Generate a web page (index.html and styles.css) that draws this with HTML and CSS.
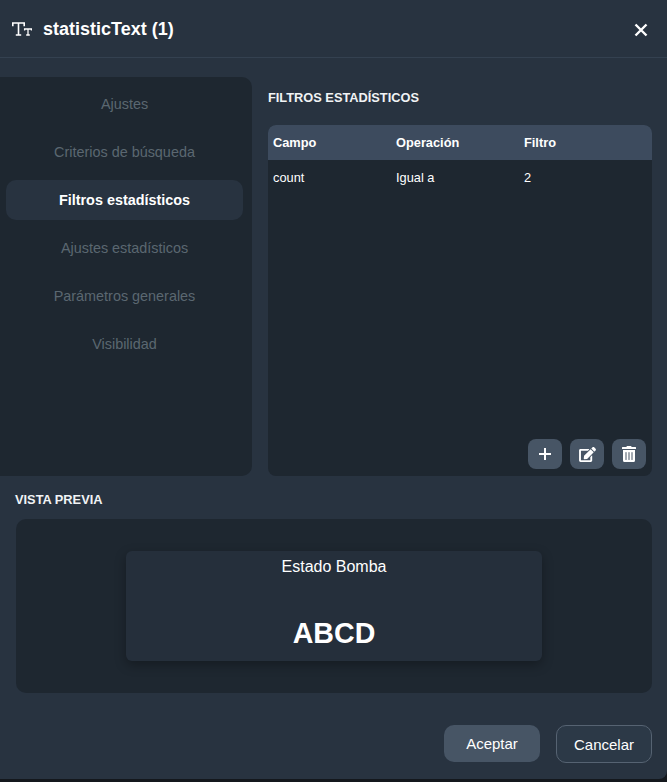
FILE: index.html
```html
<!DOCTYPE html>
<html lang="en">
<head>
    <meta charset="UTF-8">
    <title>statisticText</title>
    <link rel="stylesheet" href="styles.css">
</head>
<body>
    <div class="dialog">
        <header class="dialog-header">
            <svg class="title-icon" width="20" height="14" viewBox="0 0 20 14" fill="none" stroke="#fff" stroke-width="1.6">
                <path d="M0.8 4.2V1H12.2V4.2M6.5 1V13M3.8 13H9.2"/>
                <path stroke-width="1.3" d="M12.6 8.6V7H19.4V8.6M16 7V13M14.2 13H17.8"/>
            </svg>
            <h1>statisticText (1)</h1>
            <button type="button" class="close-btn" aria-label="Cerrar">
                <svg width="14" height="14" viewBox="0 0 14 14" stroke="#fff" stroke-width="2.4">
                    <path d="M1.5 1.5L12.5 12.5M12.5 1.5L1.5 12.5"/>
                </svg>
            </button>
        </header>

        <div class="main">
            <nav class="sidebar">
                <a class="nav-item">Ajustes</a>
                <a class="nav-item">Criterios de búsqueda</a>
                <a class="nav-item active">Filtros estadísticos</a>
                <a class="nav-item">Ajustes estadísticos</a>
                <a class="nav-item">Parámetros generales</a>
                <a class="nav-item">Visibilidad</a>
            </nav>

            <section class="content">
                <h2>FILTROS ESTADÍSTICOS</h2>
                <div class="table-box">
                    <div class="table-row table-head">
                        <span>Campo</span>
                        <span>Operación</span>
                        <span>Filtro</span>
                    </div>
                    <div class="table-row">
                        <span>count</span>
                        <span>Igual a</span>
                        <span>2</span>
                    </div>
                    <div class="table-actions">
                        <button type="button" class="icon-btn" aria-label="Añadir">
                            <svg width="14" height="14" viewBox="0 0 14 14" stroke="#fff" stroke-width="2">
                                <path d="M7 1V13M1 7H13"/>
                            </svg>
                        </button>
                        <button type="button" class="icon-btn" aria-label="Editar">
                            <svg width="17" height="15" viewBox="0 0 576 512" fill="#fff">
                                <path d="M402.6 83.2l90.2 90.2c3.8 3.8 3.8 10 0 13.8L274.4 405.6l-92.8 10.3c-12.4 1.4-22.9-9.1-21.5-21.5l10.3-92.8L388.8 83.2c3.8-3.8 10-3.8 13.8 0zm162-22.9l-48.8-48.8c-15.2-15.2-39.9-15.2-55.2 0l-35.4 35.4c-3.8 3.8-3.8 10 0 13.8l90.2 90.2c3.8 3.8 10 3.8 13.8 0l35.4-35.4c15.2-15.3 15.2-40 0-55.2zM384 346.2V448H64V128h229.8c3.2 0 6.2-1.3 8.5-3.5l40-40c7.6-7.6 2.2-20.5-8.5-20.5H48C21.5 64 0 85.5 0 112v352c0 26.5 21.5 48 48 48h352c26.5 0 48-21.5 48-48V306.2c0-10.7-12.9-16-20.5-8.5l-40 40c-2.2 2.3-3.5 5.3-3.5 8.5z"/>
                            </svg>
                        </button>
                        <button type="button" class="icon-btn" aria-label="Eliminar">
                            <svg width="14" height="16" viewBox="0 0 448 512" fill="#fff">
                                <path d="M32 464a48 48 0 0 0 48 48h288a48 48 0 0 0 48-48V128H32zm272-256a16 16 0 0 1 32 0v224a16 16 0 0 1-32 0zm-96 0a16 16 0 0 1 32 0v224a16 16 0 0 1-32 0zm-96 0a16 16 0 0 1 32 0v224a16 16 0 0 1-32 0zM432 32H312l-9.4-18.7A24 24 0 0 0 281.1 0H166.8a23.72 23.72 0 0 0-21.4 13.3L136 32H16A16 16 0 0 0 0 48v32a16 16 0 0 0 16 16h416a16 16 0 0 0 16-16V48a16 16 0 0 0-16-16z"/>
                            </svg>
                        </button>
                    </div>
                </div>
            </section>
        </div>

        <section class="preview">
            <h2>VISTA PREVIA</h2>
            <div class="preview-box">
                <div class="stat-card">
                    <div class="stat-title">Estado Bomba</div>
                    <div class="stat-value">ABCD</div>
                </div>
            </div>
        </section>

        <footer class="dialog-footer">
            <button type="button" class="btn btn-primary">Aceptar</button>
            <button type="button" class="btn btn-outline">Cancelar</button>
        </footer>
    </div>
</body>
</html>
```

FILE: styles.css
```css
* {
    box-sizing: border-box;
}

html,
body {
    height: 100%;
}

body {
    margin: 0;
    background-color: #14181d;
    color: #fff;
    font-family: "Liberation Sans", Arial, sans-serif;
    overflow: hidden;
}

.dialog {
    width: 667px;
    height: 779px;
    background-color: #283340;
    border-radius: 0 0 8px 0;
    overflow: hidden;
}

.dialog-header {
    height: 58px;
    display: flex;
    align-items: center;
    padding: 1px 18px 0 12px;
    border-bottom: 1px solid #344150;
}

.title-icon {
    margin-right: 11px;
}

h1 {
    flex: 1;
    margin: 0;
    font-size: 18px;
    font-weight: bold;
}

.close-btn {
    display: flex;
    margin-top: 2px;
    margin-right: 1px;
    padding: 0;
    border: none;
    background: none;
    cursor: pointer;
}

.main {
    display: flex;
    margin-top: 19px;
    height: 399px;
}

.sidebar {
    width: 264px;
    margin-left: -12px;
    padding: 7px 9px 0 18px;
    background-color: #1e2730;
    border-radius: 10px;
}

.nav-item {
    display: flex;
    height: 40px;
    margin-bottom: 8px;
    align-items: center;
    justify-content: center;
    border-radius: 10px;
    color: #5b6771;
    font-size: 14.4px;
}

.nav-item.active {
    background-color: #283340;
    color: #fff;
    font-weight: bold;
}

.content {
    display: flex;
    flex-direction: column;
    width: 384px;
    margin-left: 16px;
}

h2 {
    margin: 0;
    color: #f1f3f5;
    font-size: 12.8px;
    font-weight: bold;
}

.content h2 {
    padding-top: 13px;
    height: 48px;
}

.table-box {
    position: relative;
    flex: 1;
    background-color: #1e2730;
    border-radius: 8px;
    overflow: hidden;
}

.table-row {
    display: grid;
    grid-template-columns: 123px 128px 1fr;
    height: 35px;
    align-items: center;
    padding-left: 5px;
    font-size: 12.8px;
}

.table-head {
    background-color: #3d4b5e;
    font-weight: bold;
}

.table-actions {
    position: absolute;
    right: 6px;
    bottom: 7px;
    display: flex;
    gap: 8px;
}

.icon-btn {
    display: flex;
    width: 34px;
    height: 30px;
    align-items: center;
    justify-content: center;
    padding: 0;
    background-color: #475565;
    border: none;
    border-radius: 8px;
    cursor: pointer;
}

.preview {
    padding: 16px 15px 0 16px;
}

.preview h2 {
    margin-left: -1px;
    height: 27px;
}

.preview-box {
    display: flex;
    height: 174px;
    justify-content: center;
    padding-top: 32px;
    background-color: #1e2730;
    border-radius: 10px;
}

.stat-card {
    width: 416px;
    height: 110px;
    background-color: #252f3b;
    border-radius: 6px;
    box-shadow: 0 4px 12px rgba(0, 0, 0, 0.3);
    text-align: center;
}

.stat-title {
    padding-top: 7px;
    font-size: 16px;
}

.stat-value {
    margin-top: 41px;
    font-size: 28.6px;
    font-weight: bold;
}

.dialog-footer {
    display: flex;
    justify-content: flex-end;
    gap: 16px;
    padding: 32px 15px 0 0;
}

.btn {
    width: 96px;
    height: 37px;
    padding: 0;
    border-radius: 10px;
    color: #fff;
    font-family: inherit;
    font-size: 15px;
    cursor: pointer;
}

.btn-primary {
    background-color: #475565;
    border: none;
}

.btn-outline {
    height: 38px;
    background-color: #2c3947;
    border: 1px solid #566372;
}
```
